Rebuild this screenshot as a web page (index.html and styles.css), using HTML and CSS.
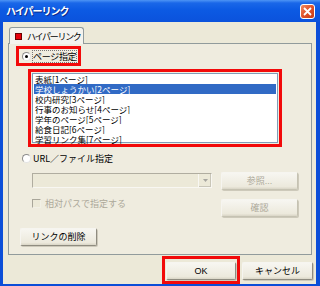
FILE: index.html
```html
<!DOCTYPE html>
<html lang="ja">
<head>
    <meta charset="UTF-8">
    <title>ハイパーリンク</title>
    <link rel="stylesheet" href="styles.css">
</head>
<body>
    <div class="window">
        <div class="titlebar">
            <span class="title">ハイパーリンク</span>
            <span class="close">
                <svg width="9" height="9" viewBox="0 0 9 9"><path d="M1 1L8 8M8 1L1 8" stroke="#fff" stroke-width="1.8"/></svg>
            </span>
        </div>
        <div class="client">
            <div class="tabs">
                <div class="tab"><span class="tab-icon"></span><span class="tab-label">ハイパーリンク</span></div>
            </div>
            <div class="panel">
                <div class="mark radio-mark">
                    <span class="radio checked"></span>
                    <span class="focus">ページ指定</span>
                </div>
                <div class="mark list-mark">
                    <ul class="listbox">
                        <li><span>表紙[1ページ]</span></li>
                        <li class="selected"><span>学校しょうかい[2ページ]</span></li>
                        <li><span>校内研究[3ページ]</span></li>
                        <li><span>行事のお知らせ[4ページ]</span></li>
                        <li><span>学年のページ[5ページ]</span></li>
                        <li><span>給食日記[6ページ]</span></li>
                        <li><span>学習リンク集[7ページ]</span></li>
                    </ul>
                </div>
                <div class="radio-row">
                    <span class="radio"></span>
                    <span class="label">URL／ファイル指定</span>
                </div>
                <div class="url-grid">
                    <div class="combo">
                        <span class="combo-arrow">
                            <svg width="5" height="3" viewBox="0 0 5 3"><path d="M0 0H5L2.5 3Z" fill="#a7a6a0"/></svg>
                        </span>
                    </div>
                    <button class="btn" disabled>参照...</button>
                    <div class="check-row">
                        <span class="checkbox"></span>
                        <span class="label">相対パスで指定する</span>
                    </div>
                    <button class="btn" disabled>確認</button>
                </div>
                <button class="btn delete-btn">リンクの削除</button>
            </div>
            <div class="footer">
                <div class="mark ok-mark">
                    <button class="btn">OK</button>
                </div>
                <button class="btn cancel-btn">キャンセル</button>
            </div>
        </div>
    </div>
</body>
</html>
```

FILE: styles.css
```css
body {
    margin: 0;
    font-family: "Noto Sans CJK JP", "Noto Sans", sans-serif;
    font-size: 9px;
    color: #000;
}
.window {
    width: 320px;
    height: 286px;
    box-sizing: border-box;
    background: #0b4ed8;
    display: flex;
    flex-direction: column;
}
.titlebar {
    height: 22px;
    flex: none;
    display: flex;
    align-items: center;
    padding: 0 5px 0 6px;
    background: linear-gradient(#4d94f5 0, #1a67e8 3px, #0c5ae3 45%, #0b52dc 100%);
}
.title {
    color: #fff;
    font-weight: bold;
    font-size: 10px;
    line-height: 12px;
    letter-spacing: -1px;
    text-shadow: 1px 1px 0 #0a2a8a;
}
.close {
    margin-left: auto;
    width: 15px;
    height: 15px;
    box-sizing: border-box;
    border: 1px solid #fff;
    border-radius: 3px;
    background: linear-gradient(135deg, #f08a62, #e0522a 50%, #c63c16);
    display: flex;
    align-items: center;
    justify-content: center;
}
.client {
    flex: 1;
    margin: 0 4px 2px 3px;
    background: #ece9d8;
    display: flex;
    flex-direction: column;
}
.tabs {
    display: flex;
    margin-top: 5px;
    margin-bottom: -1px;
    position: relative;
    z-index: 1;
}
.tab {
    margin-left: 6px;
    width: 75px;
    height: 17px;
    box-sizing: border-box;
    border: 1px solid #919b9c;
    border-bottom: none;
    border-radius: 3px 3px 0 0;
    background: #f4f3ee;
    display: flex;
    align-items: center;
    gap: 5px;
    padding-left: 5px;
    white-space: nowrap;
}
.tab-label {
    letter-spacing: -1.3px;
    line-height: 11px;
}
.tab-icon {
    width: 7px;
    height: 7px;
    flex: none;
    box-sizing: border-box;
    background: #e8000b;
    border: 1px solid #6b0000;
}
.panel {
    height: 212px;
    margin: 0 4px 0 5px;
    box-sizing: border-box;
    border: 1px solid #919b9c;
    background: #efecdf;
    display: flex;
    flex-direction: column;
    align-items: flex-start;
}
.mark {
    border: 3px solid #f20a0a;
    box-sizing: border-box;
}
.radio-mark {
    margin: 2px 0 0 7px;
    width: 65px;
    height: 20px;
    display: flex;
    align-items: center;
    gap: 2px;
    padding-left: 3px;
    white-space: nowrap;
}
.focus {
    outline: 1px dotted #777;
    line-height: 11px;
    letter-spacing: -0.3px;
}
.label {
    line-height: 11px;
    white-space: nowrap;
}
.radio {
    width: 9px;
    height: 9px;
    flex: none;
    box-sizing: border-box;
    border-radius: 50%;
    border: 1px solid #8c8c8c;
    border-right-color: #e4e4e4;
    border-bottom-color: #e4e4e4;
    background: #fff;
    display: flex;
    align-items: center;
    justify-content: center;
}
.radio.checked::after {
    content: "";
    width: 3px;
    height: 3px;
    border-radius: 50%;
    background: #000;
}
.list-mark {
    margin: 3px 0 0 19px;
    width: 254px;
    height: 78px;
    padding: 1px;
}
.listbox {
    list-style: none;
    margin: 0;
    padding: 0 1px;
    height: 100%;
    box-sizing: border-box;
    border: 1px solid #7f9db9;
    background: #fff;
    font-size: 8.5px;
}
.listbox li {
    height: 10px;
    display: flex;
    padding-left: 1px;
    white-space: nowrap;
}
.listbox li span {
    display: block;
    height: 10px;
    line-height: 10px;
    overflow: hidden;
}
.listbox li.selected {
    background: #316ac5;
    color: #fff;
}
.radio-row {
    margin: 5px 0 0 13px;
    height: 12px;
    display: flex;
    align-items: center;
    gap: 2px;
}
.url-grid {
    margin: 8px 0 0 23px;
    display: grid;
    grid-template-columns: 180px 77px;
    column-gap: 9px;
    row-gap: 9px;
}
.combo {
    margin-top: 1px;
    height: 15px;
    box-sizing: border-box;
    border: 1px solid;
    border-color: #b0ada0 #f8f7f2 #f8f7f2 #b0ada0;
    background: #ece9d8;
    display: flex;
    justify-content: flex-end;
}
.combo-arrow {
    width: 12px;
    display: flex;
    align-items: center;
    justify-content: center;
    border-left: 1px solid #f8f7f2;
    box-shadow: inset -1px -1px 0 #c9c6b8;
}
.check-row {
    display: flex;
    align-items: flex-start;
    gap: 4px;
    color: #aca899;
}
.check-row .label {
    line-height: 10px;
}
.checkbox {
    width: 9px;
    height: 9px;
    flex: none;
    box-sizing: border-box;
    border: 1px solid;
    border-color: #a9a69a #f2f0e6 #f2f0e6 #a9a69a;
    background: #ece9d8;
}
.btn {
    height: 18px;
    width: 77px;
    padding: 0;
    font: inherit;
    font-family: "Liberation Sans", "Noto Sans CJK JP", sans-serif;
    line-height: 11px;
    color: #000;
    border: 1px solid #b9b5a5;
    border-color: #f6f5f0 #8f8c80 #8f8c80 #f6f5f0;
    border-radius: 2px;
    background: linear-gradient(#f7f6f1, #ece9dc 85%, #d9d5c6);
    box-shadow: 1px 1px 0 #cdc9ba;
}
.btn:disabled {
    color: #aca899;
    border-color: #f6f5f0 #c5c2b2 #c5c2b2 #f6f5f0;
}
.delete-btn {
    margin: 11px 0 0 11px;
}
.footer {
    margin-top: 1px;
    display: flex;
    justify-content: flex-end;
    align-items: flex-start;
    padding-right: 3px;
}
.ok-mark {
    width: 78px;
    height: 28px;
    padding: 3px 1px 1px 1px;
}
.ok-mark .btn {
    width: 70px;
}
.cancel-btn {
    width: 71px;
    margin: 6px 0 0 2px;
}
```
